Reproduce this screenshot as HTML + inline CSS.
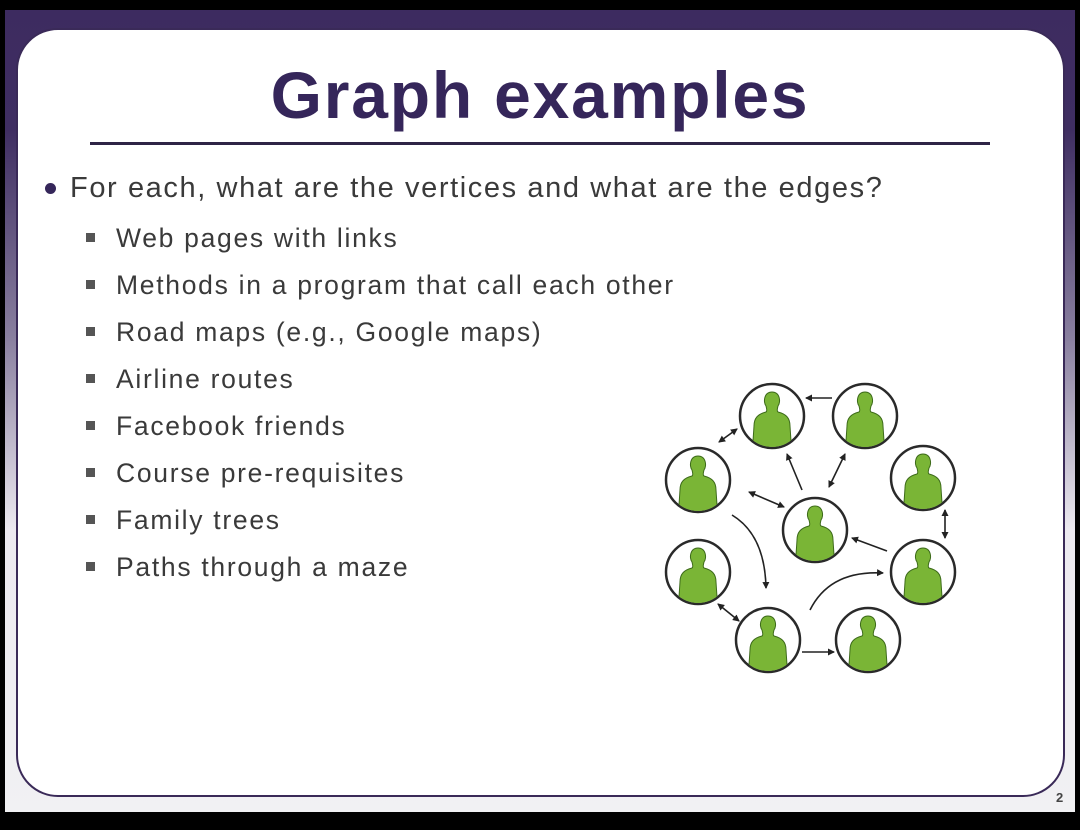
<!DOCTYPE html>
<html><head><meta charset="utf-8"><style>
html,body{margin:0;padding:0;background:#000;}
body{width:1080px;height:830px;position:relative;overflow:hidden;font-family:"Liberation Sans",Arial,sans-serif;}
.slide{position:absolute;left:5px;top:10px;width:1070px;height:802px;background:linear-gradient(#3d2b60 0px,#3f2e62 120px,#8a80a0 330px,#ece9f0 520px,#f1f1f3 802px);}
.card{position:absolute;left:16px;top:28px;width:1045px;height:765px;background:#fff;border:2px solid #3a2a58;border-radius:42px;}
h1{position:absolute;left:0;width:1080px;top:57px;margin:0;text-align:center;font-size:66px;font-weight:bold;color:#35265a;letter-spacing:1.8px;}
.rule{position:absolute;left:90px;top:142px;width:900px;height:3px;background:#2e2446;}
.t{position:absolute;color:#3a3a3a;white-space:nowrap;}
.main{left:70px;top:172px;font-size:29px;letter-spacing:1.6px;}
.dot{position:absolute;left:45px;top:183px;width:11px;height:11px;border-radius:50%;background:#35265a;}
.sub{left:116px;font-size:26.5px;letter-spacing:1.7px;}
.sq{position:absolute;left:86px;width:9px;height:9px;background:#555;}
.pg{position:absolute;left:1056px;top:790px;font-size:13px;font-weight:bold;color:#444;}
</style></head><body>
<div class="slide"></div>
<div class="card"></div>
<h1>Graph examples</h1>
<div class="rule"></div>
<div class="dot"></div>
<div class="t main">For each, what are the vertices and what are the edges?</div>

<div class="sq" style="top:233px"></div><div class="t sub" style="top:223px">Web pages with links</div>
<div class="sq" style="top:280px"></div><div class="t sub" style="top:270px">Methods in a program that call each other</div>
<div class="sq" style="top:327px"></div><div class="t sub" style="top:317px">Road maps (e.g., Google maps)</div>
<div class="sq" style="top:374px"></div><div class="t sub" style="top:364px">Airline routes</div>
<div class="sq" style="top:421px"></div><div class="t sub" style="top:411px">Facebook friends</div>
<div class="sq" style="top:468px"></div><div class="t sub" style="top:458px">Course pre-requisites</div>
<div class="sq" style="top:515px"></div><div class="t sub" style="top:505px">Family trees</div>
<div class="sq" style="top:562px"></div><div class="t sub" style="top:552px">Paths through a maze</div>

<svg style="position:absolute;left:0;top:0" width="1080" height="830">
<defs>
<marker id="ar" markerWidth="8" markerHeight="8" refX="6" refY="4" orient="auto" markerUnits="userSpaceOnUse"><path d="M0,0.5 L7,4 L0,7.5z" fill="#222"/></marker>
<marker id="as" markerWidth="8" markerHeight="8" refX="1" refY="4" orient="auto" markerUnits="userSpaceOnUse"><path d="M7,0.5 L0,4 L7,7.5z" fill="#222"/></marker>
<clipPath id="cc"><circle cx="0" cy="0" r="31"/></clipPath>
<g id="p">
<circle cx="0" cy="0" r="32" fill="#fff" stroke="#2a2a2a" stroke-width="2.5"/>
<g clip-path="url(#cc)">
<path d="M-6,-10 C-9,-14 -8,-24 0,-24 C8,-24 9,-14 6,-10 C5,-6 5,-5 6,-4 C14,-2 18,2 18,10 L20,40 L-20,40 L-18,10 C-18,2 -14,-2 -6,-4 C-5,-5 -5,-6 -6,-10Z" fill="#7ab536" stroke="#3d6b1a" stroke-width="1"/>
</g>
</g>
</defs>
<use href="#p" x="772" y="416"/>
<use href="#p" x="865" y="416"/>
<use href="#p" x="698" y="480"/>
<use href="#p" x="923" y="478"/>
<use href="#p" x="815" y="530"/>
<use href="#p" x="923" y="572"/>
<use href="#p" x="698" y="572"/>
<use href="#p" x="768" y="640"/>
<use href="#p" x="868" y="640"/>
<g stroke="#222" stroke-width="1.6" fill="none">
<line x1="832" y1="398" x2="806" y2="398" marker-end="url(#ar)"/>
<line x1="719" y1="442" x2="737" y2="429" marker-end="url(#ar)" marker-start="url(#as)"/>
<line x1="802" y1="490" x2="787" y2="454" marker-end="url(#ar)"/>
<line x1="829" y1="487" x2="845" y2="454" marker-end="url(#ar)" marker-start="url(#as)"/>
<line x1="749" y1="492" x2="784" y2="507" marker-end="url(#ar)" marker-start="url(#as)"/>
<line x1="945" y1="510" x2="945" y2="538" marker-end="url(#ar)" marker-start="url(#as)"/>
<line x1="887" y1="551" x2="852" y2="538" marker-end="url(#ar)"/>
<path d="M732,515 Q765,535 766,588" marker-end="url(#ar)"/>
<path d="M810,610 Q830,570 883,573" marker-end="url(#ar)"/>
<line x1="718" y1="604" x2="739" y2="621" marker-end="url(#ar)" marker-start="url(#as)"/>
<line x1="802" y1="652" x2="834" y2="652" marker-end="url(#ar)"/>
</g>
</svg>
<div class="pg">2</div>
</body></html>
